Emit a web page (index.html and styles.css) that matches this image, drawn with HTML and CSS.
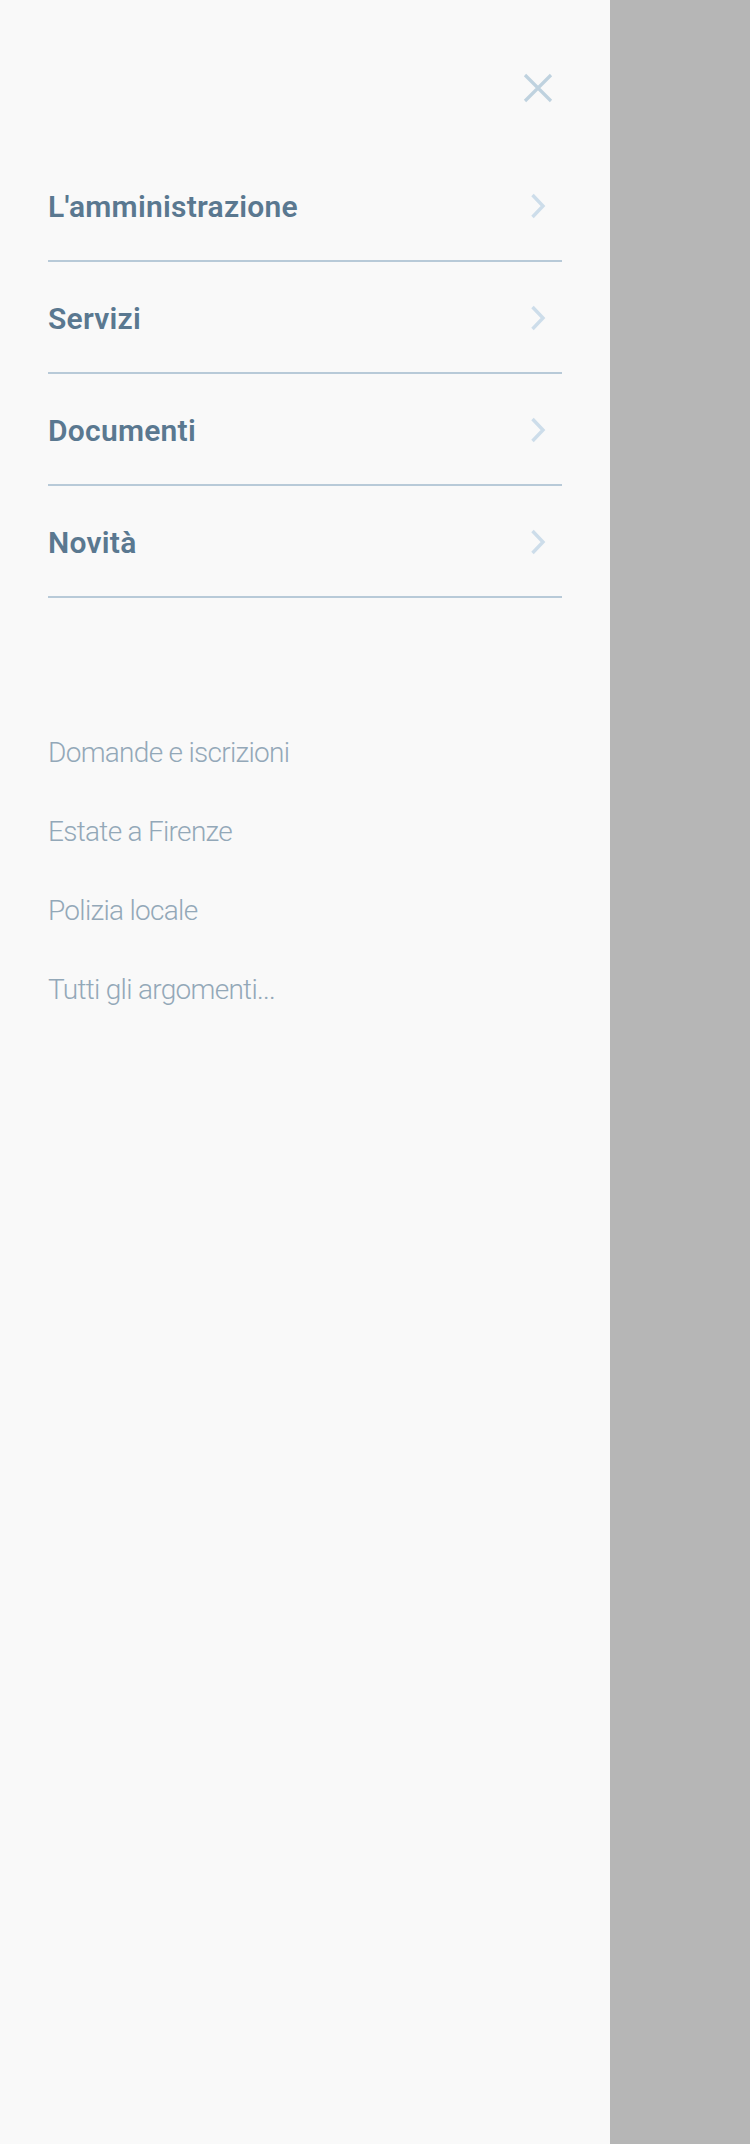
FILE: index.html
```html
<!DOCTYPE html>
<html lang="it">
<head>
<meta charset="utf-8">
<title>Menu</title>
<link rel="stylesheet" href="styles.css">
</head>
<body>
<div class="page">
  <aside class="panel">
    <div class="panel-head">
      <button class="close" aria-label="Chiudi">
        <svg width="30" height="30" viewBox="0 0 30 30"><path d="M2 2 L28 28 M28 2 L2 28" stroke="#bfd2df" stroke-width="3.2" fill="none"/></svg>
      </button>
    </div>
    <nav class="main-nav">
      <a class="nav-row" href="#"><span>L'amministrazione</span><svg class="chev" width="16" height="26" viewBox="0 0 16 26"><path d="M2.5 2 L13 13 L2.5 24" stroke="#cdddea" stroke-width="3.4" fill="none"/></svg></a>
      <a class="nav-row" href="#"><span>Servizi</span><svg class="chev" width="16" height="26" viewBox="0 0 16 26"><path d="M2.5 2 L13 13 L2.5 24" stroke="#cdddea" stroke-width="3.4" fill="none"/></svg></a>
      <a class="nav-row" href="#"><span>Documenti</span><svg class="chev" width="16" height="26" viewBox="0 0 16 26"><path d="M2.5 2 L13 13 L2.5 24" stroke="#cdddea" stroke-width="3.4" fill="none"/></svg></a>
      <a class="nav-row" href="#"><span>Novità</span><svg class="chev" width="16" height="26" viewBox="0 0 16 26"><path d="M2.5 2 L13 13 L2.5 24" stroke="#cdddea" stroke-width="3.4" fill="none"/></svg></a>
    </nav>
    <ul class="topics">
      <li><a href="#">Domande e iscrizioni</a></li>
      <li><a href="#">Estate a Firenze</a></li>
      <li><a href="#">Polizia locale</a></li>
      <li><a href="#">Tutti gli argomenti...</a></li>
    </ul>
  </aside>
  <div class="overlay"></div>
</div>
</body>
</html>
```
FILE: styles.css
```css
html, body {
  margin: 0;
  padding: 0;
}
body {
  background: #b6b6b6;
  font-family: Roboto, "Noto Sans", sans-serif;
}
.page {
  display: flex;
  width: 750px;
  height: 2144px;
}
.panel {
  width: 610px;
  height: 2144px;
  background: #f9f9f9;
  box-sizing: border-box;
  padding: 0 48px;
}
.overlay {
  flex: 1;
  background: #b6b6b6;
}
.panel-head {
  height: 150px;
  display: flex;
  justify-content: flex-end;
  align-items: flex-start;
}
.close {
  margin-top: 73px;
  margin-right: 9px;
  padding: 0;
  border: 0;
  background: none;
  width: 30px;
  height: 30px;
  display: block;
}
.close svg { display: block; }
.main-nav {
  display: flex;
  flex-direction: column;
}
.nav-row {
  box-sizing: border-box;
  height: 112px;
  padding-top: 3px;
  border-bottom: 2px solid #b8cad8;
  display: flex;
  align-items: center;
  justify-content: space-between;
  text-decoration: none;
  color: #5a7890;
  font-size: 30px;
  font-weight: 600;
  letter-spacing: 0.25px;
}
.chev {
  display: block;
  margin-right: 16px;
  margin-top: -1px;
}
.topics {
  list-style: none;
  margin: 115px 0 0;
  padding: 0;
}
.topics li {
  height: 79px;
  display: flex;
  align-items: center;
}
.topics a {
  color: #93a8b8;
  text-decoration: none;
  font-size: 28px;
  font-weight: 300;
  letter-spacing: -0.7px;
}
```
